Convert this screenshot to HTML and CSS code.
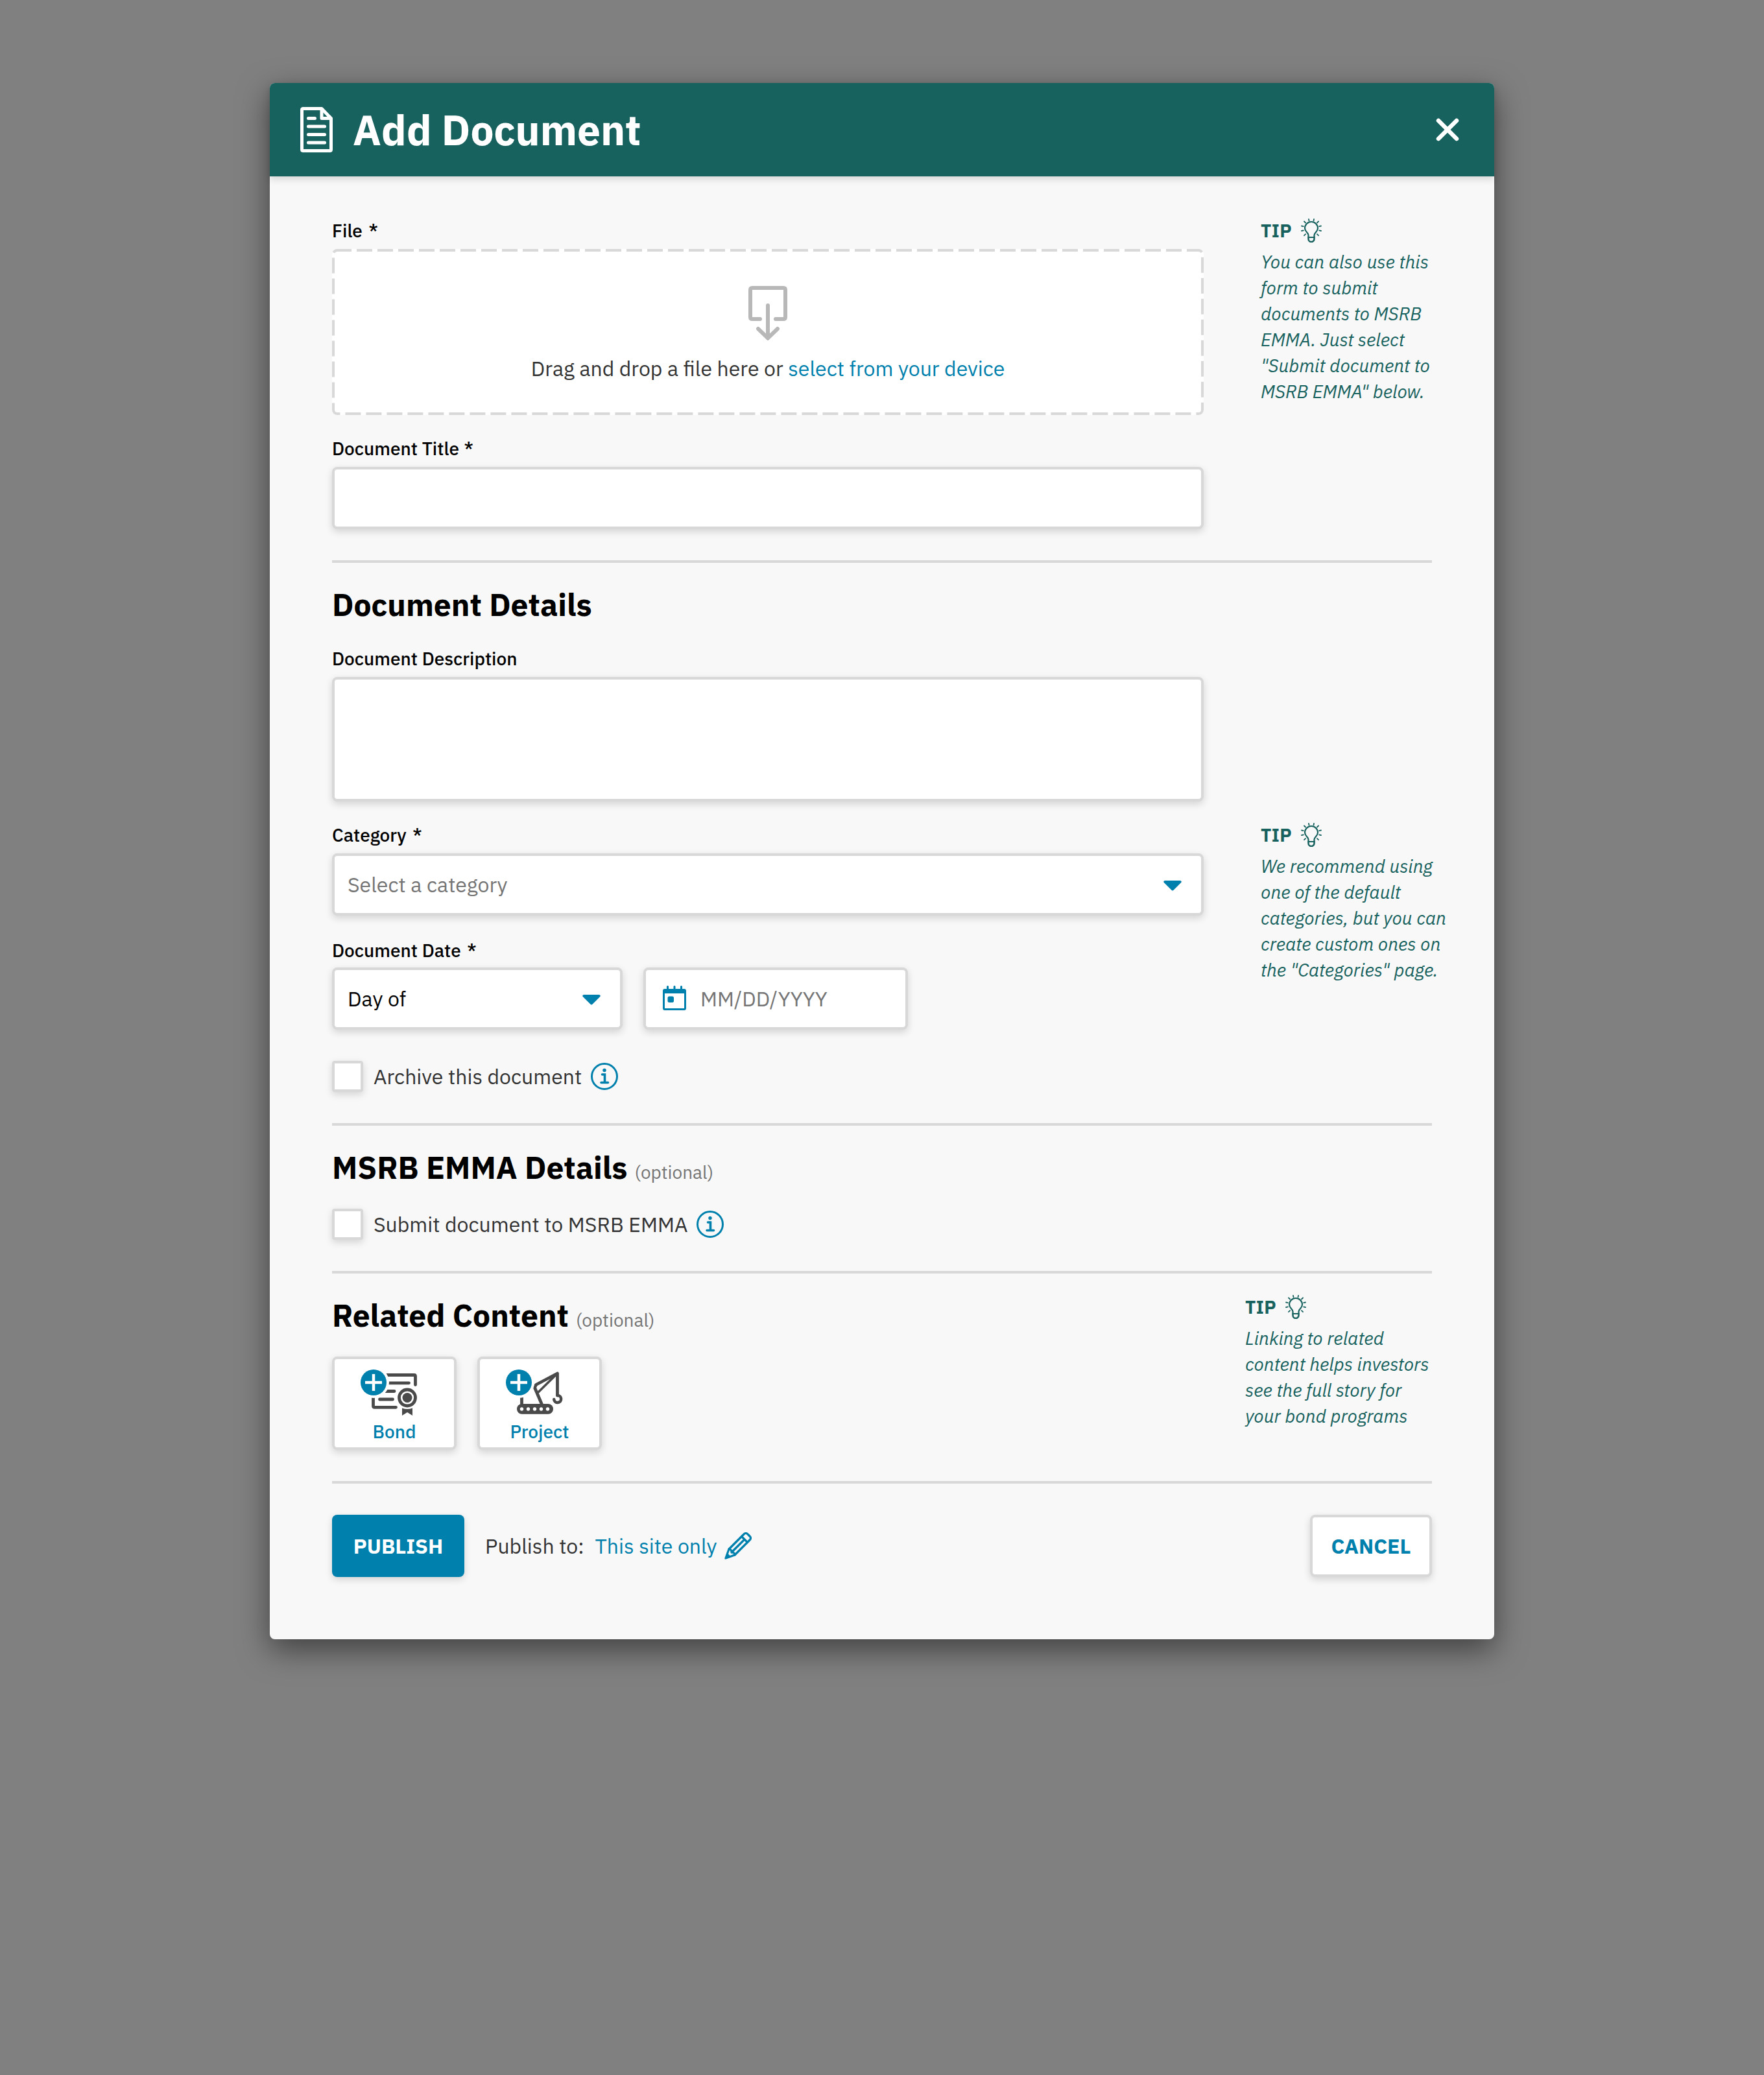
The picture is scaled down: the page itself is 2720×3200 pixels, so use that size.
FILE: index.html
```html
<!DOCTYPE html>
<html>
	<head>
		<meta charset="utf-8">
		<title>Add Document</title>
		<link rel="stylesheet" href="styles.css">
	</head>
	<body>
		<!-- shared icons -->
		<svg width="0" height="0" class="defs">
			<symbol id="bulb" viewBox="0 0 32 37">
				<g fill="none" stroke="currentColor" stroke-width="2.200" stroke-linecap="round" stroke-linejoin="round">
					<path d="M11.500 29v-3.500c0-3.500-5.500-5.500-5.500-10.500a10 10 0 0 1 20 0c0 5-5.500 7-5.500 10.500v3.500z"/>
					<path d="M11.500 29v2.500a4.500 4.500 0 0 0 9 0v-2.500" stroke-width="2.500"/>
					<path stroke-width="1.800" d="M12 1l.5 2.500M20 1l-.5 2.500M5 4.500l2 2M27 4.500l-2 2M1 11.500l2.800.6M31 11.500l-2.800.6M1 19l2.800-.6M31 19l-2.800-.6M5 26.200l2-2M27 26.200l-2-2"/>
				</g>
			</symbol>
			<symbol id="info" viewBox="0 0 42 42">
				<circle cx="21" cy="21" r="19.500" fill="none" stroke="currentColor" stroke-width="3"/>
				<circle cx="21" cy="11.500" r="2.700" fill="currentColor"/>
				<path d="M17.500 18h4v12.500M16 30.500h10.500" fill="none" stroke="currentColor" stroke-width="3.600" stroke-linecap="round"/>
			</symbol>
			<symbol id="caret" viewBox="0 0 28 16">
				<path d="M2 0h24q3 1 1 3.200L15.500 14.800q-1.500 1.400-3 0L1 3.200Q-1 1 2 0z" fill="currentColor"/>
			</symbol>
		</svg>

		<div class="modal">
			<div class="modal-header">
				<svg class="doc-icon" viewBox="0 0 50 70">
					<g fill="none" stroke="#fff" stroke-width="5" stroke-linejoin="round" stroke-linecap="round">
						<path d="M4.500 2.500H33L47.500 17.500v48q0 2-2 2h-41q-2 0-2-2v-61q0-2 2-2z"/>
						<path d="M33 4v13.500h13.500"/>
						<path d="M12.500 17.500h10M12.500 30h25M12.500 42.500h25M12.500 55h25"/>
					</g>
				</svg>
				<h1 class="modal-title">Add Document</h1>
				<svg class="close-icon" viewBox="0 0 36 36">
					<path d="M4 4l28 28M32 4L4 32" stroke="#fff" stroke-width="6.500" stroke-linecap="round"/>
				</svg>
			</div>

			<div class="modal-body">
				<div class="section">
					<div class="row">
						<div class="fields">
							<div class="label">File <span class="req">*</span></div>
							<div class="dropzone">
								<svg class="dash" width="1344" height="256">
									<rect x="2" y="2" width="1340" height="252" rx="6" fill="none" stroke="#d8d8d8" stroke-width="4" stroke-dasharray="24 8" stroke-dashoffset="2"/>
								</svg>
								<svg class="drop-icon" viewBox="0 0 60 84">
									<g fill="none" stroke="#b8b8b8" stroke-width="6" stroke-linecap="round">
										<path d="M18 51H6q-3 0-3-3V6q0-3 3-3h48q3 0 3 3v42q0 3-3 3H42"/>
										<path d="M30 30v50"/>
										<path d="M15 66l15 14.500L45 66"/>
									</g>
								</svg>
								<div class="drop-text">Drag and drop a file here or <a class="link">select from your device</a></div>
							</div>
							<div class="label label-gap">Document Title <span class="req-title">*</span></div>
							<div class="input"></div>
						</div>
						<div class="tip">
							<div class="tip-head">TIP <svg class="bulb"><use href="#bulb"/></svg></div>
							<div class="tip-text">You can also use this<br>form to submit<br>documents to MSRB<br>EMMA. Just select<br>"Submit document to<br>MSRB EMMA" below.</div>
						</div>
					</div>
				</div>

				<div class="section">
					<h2 class="heading">Document Details</h2>
					<div class="label label-gap">Document Description</div>
					<div class="input textarea"></div>
					<div class="row row-gap">
						<div class="fields">
							<div class="label">Category <span class="req">*</span></div>
							<div class="input select">
								<span class="placeholder">Select a category</span>
								<svg class="caret"><use href="#caret"/></svg>
							</div>
							<div class="label label-date">Document Date <span class="req">*</span></div>
							<div class="date-row">
								<div class="input select day">
									<span class="value">Day of</span>
									<svg class="caret"><use href="#caret"/></svg>
								</div>
								<div class="input date">
									<svg class="cal-icon" viewBox="0 0 36 38">
										<path d="M3 5h30q3 0 3 3v27q0 3-3 3H3q-3 0-3-3V8q0-3 3-3zM3 12v23h30V12z" fill="#0080ad" fill-rule="evenodd"/>
										<path d="M7.500 1.500v5M18 1.500v5M28.500 1.500v5" stroke="#0080ad" stroke-width="3" stroke-linecap="round"/>
										<rect x="7.500" y="16.500" width="9.500" height="9.500" rx="2.500" fill="#0080ad"/>
									</svg>
									<span class="placeholder mmdd">MM/DD/YYYY</span>
								</div>
							</div>
							<div class="check-row">
								<span class="checkbox"></span>
								<span class="check-label">Archive this document</span>
								<svg class="info"><use href="#info"/></svg>
							</div>
						</div>
						<div class="tip">
							<div class="tip-head">TIP <svg class="bulb"><use href="#bulb"/></svg></div>
							<div class="tip-text">We recommend using<br>one of the default<br>categories, but you can<br>create custom ones on<br>the "Categories" page.</div>
						</div>
					</div>
				</div>

				<div class="section">
					<h2 class="heading">MSRB EMMA Details<span class="optional">(optional)</span></h2>
					<div class="check-row check-emma">
						<span class="checkbox"></span>
						<span class="check-label">Submit document to MSRB EMMA</span>
						<svg class="info"><use href="#info"/></svg>
					</div>
				</div>

				<div class="section">
					<div class="row">
						<div class="fields">
							<h2 class="heading">Related Content<span class="optional">(optional)</span></h2>
							<div class="cards">
								<div class="card">
									<!-- bond certificate with a ribbon -->
									<svg class="card-icon" viewBox="552 2108 112 78">
										<g fill="none" stroke="#4a4a4a" stroke-width="4.800" stroke-linecap="round" stroke-linejoin="round">
											<path d="M590 2120.500h48.500q2 0 2 2v13"/>
											<path d="M596 2132.800h34.500M590 2145.500h18M585.500 2158h20"/>
											<path d="M575.500 2150v18.300q0 2 2 2h33"/>
										</g>
										<circle cx="576" cy="2132" r="24" fill="#fff"/>
										<circle cx="628" cy="2155.500" r="12.500" fill="#fff" stroke="#4a4a4a" stroke-width="4.800"/>
										<circle cx="628" cy="2155.500" r="7.500" fill="#4a4a4a"/>
										<path d="M620 2171.500q8 3 16 0v11.500l-8-5-8 5z" fill="#4a4a4a"/>
										<circle cx="576" cy="2132" r="20" fill="#0080ad"/>
										<path d="M576 2119v26M563 2132h26" stroke="#fff" stroke-width="4.500"/>
									</svg>
									<div class="card-label">Bond</div>
								</div>
								<div class="card">
									<!-- crane -->
									<svg class="card-icon" viewBox="776 2108 112 78">
										<g fill="none" stroke="#4a4a4a" stroke-width="4.800" stroke-linecap="round" stroke-linejoin="round">
											<path d="M804.500 2150v18"/>
											<path d="M836 2167l-11.500-27 2-4.500L859.500 2118v34"/>
											<path d="M829.500 2147.500L858.500 2119" stroke-width="3.600"/>
											<path d="M859.500 2152a5.500 5.500 0 1 1-5.300 6" stroke-width="4.500"/>
										</g>
										<circle cx="800" cy="2132" r="24" fill="#fff"/>
										<rect x="797" y="2165" width="56" height="15.700" rx="7.800" fill="#4a4a4a"/>
										<g fill="#fff">
											<circle cx="804.500" cy="2173" r="2.700"/>
											<circle cx="814.500" cy="2173" r="2.700"/>
											<circle cx="824.500" cy="2173" r="2.700"/>
											<circle cx="834.500" cy="2173" r="2.700"/>
											<circle cx="844.500" cy="2173" r="2.700"/>
										</g>
										<circle cx="800" cy="2132" r="20" fill="#0080ad"/>
										<path d="M800 2119v26M787 2132h26" stroke="#fff" stroke-width="4.500"/>
									</svg>
									<div class="card-label">Project</div>
								</div>
							</div>
						</div>
						<div class="tip tip-related">
							<div class="tip-head">TIP <svg class="bulb"><use href="#bulb"/></svg></div>
							<div class="tip-text">Linking to related<br>content helps investors<br>see the full story for<br>your bond programs</div>
						</div>
					</div>
				</div>

				<div class="footer">
					<div class="btn btn-publish">PUBLISH</div>
					<div class="publish-to">Publish to:</div>
					<a class="link site">This site only</a>
					<svg class="pencil" viewBox="0 0 42 42">
						<g fill="none" stroke="#0080ad" stroke-width="3.200" stroke-linejoin="round" stroke-linecap="round">
							<path d="M2 40l5-14L30 3q3-3 6 0l3 3q3 3 0 6L16 35z"/>
							<path d="M26.500 6.500l9 9M7 26q4 0 4 5 5 0 5 4M31 11L11 31"/>
						</g>
						<path d="M.5 41.500l3.500-10 6.500 6.500z" fill="#0080ad"/>
					</svg>
					<div class="btn btn-cancel">CANCEL</div>
				</div>
			</div>
		</div>
	</body>
</html>
```
FILE: styles.css
```css
* {
	box-sizing: border-box;
}
body {
	margin: 0;
	padding-top: 128px;
	min-height: 3200px;
	background-color: #808080;
	font-family: "IBM Plex Sans", Roboto, "Liberation Sans", sans-serif;
	font-size: 32px;
	color: #333;
}
svg {
	display: block;
	flex: none;
}
.defs {
	position: absolute;
}
.modal {
	width: 1888px;
	height: 2400px;
	margin: 0 auto;
	border-radius: 8px;
	background-color: #f8f8f8;
	box-shadow: 0 16px 48px rgba(0,0,0,0.5);
}
.modal-header {
	display: flex;
	align-items: center;
	height: 144px;
	padding: 0 54px 0 47px;
	border-radius: 8px 8px 0 0;
	background-color: #17625e;
	box-shadow: 0 4px 12px rgba(0,0,0,0.15);
}
.doc-icon {
	width: 50px;
	height: 70px;
}
.modal-title {
	margin: 0 auto 0 31px;
	font-size: 64px;
	line-height: 80px;
	color: #fff;
}
.close-icon {
	width: 36px;
	height: 36px;
}

.modal-body {
	padding: 32px 96px 0;
}
.section {
	padding: 32px 0 48px;
	border-bottom: 4px solid #d8d8d8;
}
.row {
	display: flex;
	align-items: flex-start;
}
.row-gap {
	margin-top: 32px;
}
.fields {
	flex: none;
	width: 1344px;
}

.label {
	height: 40px;
	margin-bottom: 8px;
	font-size: 28px;
	font-weight: 500;
	line-height: 40px;
	color: #000;
}
.label-gap {
	margin-top: 32px;
}
.label-date {
	margin: 34px 0 6px;
}
.req {
	margin-left: 3px;
}
.req-title {
	margin-left: 1px;
}
.input {
	width: 1344px;
	height: 96px;
	border: 4px solid #d8d8d8;
	border-radius: 8px;
	background-color: #fff;
	box-shadow: 0 4px 12px rgba(0,0,0,0.15);
}
.textarea {
	height: 192px;
}
.select {
	display: flex;
	align-items: center;
	justify-content: space-between;
	padding: 0 30px 0 20px;
}
.placeholder {
	color: #757575;
}
.value {
	color: #000;
}
.caret {
	width: 28px;
	height: 16px;
	margin-top: 3px;
	color: #0080ad;
}
.date-row {
	display: flex;
	gap: 32px;
	margin-bottom: 48px;
}
.day {
	width: 448px;
}
.date {
	display: flex;
	align-items: center;
	width: 408px;
	padding-left: 26px;
}
.cal-icon {
	width: 36px;
	height: 38px;
	margin-top: -2px;
}
.mmdd {
	margin-left: 22px;
}

.dropzone {
	position: relative;
	display: flex;
	flex-direction: column;
	align-items: center;
	height: 256px;
	padding-top: 57px;
	border-radius: 8px;
	background-color: #fff;
}
.dash {
	position: absolute;
	top: 0;
	left: 0;
}
.drop-icon {
	width: 60px;
	height: 84px;
}
.drop-text {
	margin-top: 23px;
	line-height: 40px;
}
.link {
	color: #0080ad;
}

.heading {
	height: 64px;
	margin: 0;
	font-size: 48px;
	line-height: 64px;
	color: #000;
}
.optional {
	margin-left: 11px;
	font-size: 28px;
	font-weight: normal;
	color: #757575;
}

.check-row {
	display: flex;
	align-items: center;
	height: 48px;
}
.check-emma {
	margin-top: 32px;
}
.checkbox {
	width: 48px;
	height: 48px;
	border: 4px solid #d8d8d8;
	border-radius: 4px;
	background-color: #fff;
	box-shadow: 0 4px 12px rgba(0,0,0,0.15);
}
.check-label {
	margin-left: 16px;
}
.info {
	width: 42px;
	height: 42px;
	margin-left: 14px;
	color: #0080ad;
}

.tip {
	flex: none;
	width: 288px;
	margin-left: 88px;
	font-size: 28px;
	line-height: 40px;
	color: #17625e;
}
.tip-related {
	margin-left: 64px;
}
.tip-head {
	display: flex;
	height: 40px;
	margin-bottom: 8px;
	font-weight: bold;
	letter-spacing: 0.5px;
}
.bulb {
	width: 32px;
	height: 37px;
	margin-left: 14px;
	margin-top: 1px;
}
.tip-text {
	font-style: italic;
	white-space: nowrap;
}

.cards {
	display: flex;
	gap: 32px;
	margin-top: 32px;
}
.card {
	width: 192px;
	height: 144px;
	padding-top: 12px;
	border: 4px solid #d8d8d8;
	border-radius: 8px;
	background-color: #fff;
	box-shadow: 0 4px 12px rgba(0,0,0,0.15);
}
.card-icon {
	width: 112px;
	height: 78px;
	margin: 0 auto;
}
.card-label {
	font-size: 28px;
	font-weight: 500;
	line-height: 43px;
	text-align: center;
	color: #0080ad;
}

.footer {
	display: flex;
	align-items: center;
	padding-top: 48px;
}
.btn {
	height: 96px;
	border-radius: 8px;
	font-weight: bold;
	line-height: 96px;
	text-align: center;
	box-shadow: 0 4px 12px rgba(0,0,0,0.15);
}
.btn-publish {
	width: 204px;
	background-color: #0080ad;
	color: #fff;
}
.btn-cancel {
	width: 188px;
	margin-left: auto;
	border: 4px solid #d8d8d8;
	background-color: #fff;
	line-height: 88px;
	color: #0080ad;
}
.publish-to {
	margin-left: 32px;
}
.site {
	margin-left: 17px;
}
.pencil {
	width: 42px;
	height: 42px;
	margin-left: 12px;
}
```
